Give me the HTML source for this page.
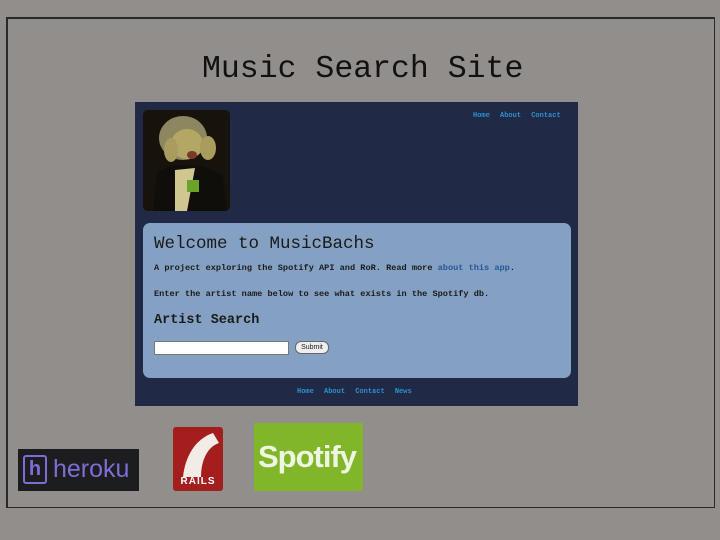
<!DOCTYPE html>
<html><head><style>
body{margin:0;width:720px;height:540px;background:#928e8c;position:relative;overflow:hidden;font-family:"Liberation Mono",monospace}
.frame{position:absolute;left:6px;top:17px;width:706px;height:488px;border:1px solid #2a2a2a;border-top-width:2px;border-left-width:2px}
.title{position:absolute;left:202px;top:52px;font-size:31.5px;color:#111;white-space:nowrap}
.panel{position:absolute;left:135px;top:102px;width:443px;height:304px;background:#202945}
.nav{position:absolute;font-size:7px;font-weight:bold;color:#2f8fd0;white-space:nowrap}
.nav span{margin-right:6px}
.img{position:absolute;left:8px;top:8px;width:87px;height:101px;border-radius:5px;overflow:hidden;background:#14110b}
.box{position:absolute;left:8px;top:121px;width:428px;height:155px;background:#84a0c2;border-radius:7px;color:#1a1a1a}
.h1{position:absolute;left:11px;top:11px;font-size:17.5px;white-space:nowrap}
.p{position:absolute;left:11px;font-size:8.6px;font-weight:bold;white-space:nowrap}
.h2{position:absolute;left:11px;top:90px;font-size:13.5px;font-weight:bold;white-space:nowrap}
input{position:absolute;left:11px;top:118px;width:133px;height:12px;border:1px solid #777;background:#fff;padding:0;margin:0}
.btn{position:absolute;left:152px;top:118px;width:32px;height:11px;border:1px solid #666;border-radius:6px;background:#eee;font:7px "Liberation Sans",sans-serif;text-align:center;line-height:11px}
</style></head><body>
<div class="frame"></div>
<div class="title">Music Search Site</div>
<div class="panel">
  <div class="img">
    <svg width="87" height="101" viewBox="0 0 87 101">
      <rect width="87" height="101" fill="#17130c"/>
      <ellipse cx="40" cy="28" rx="24" ry="22" fill="#8c8760"/>
      <ellipse cx="44" cy="34" rx="16" ry="15" fill="#b4a766"/>
      <ellipse cx="28" cy="40" rx="7" ry="12" fill="#a99c5d"/>
      <ellipse cx="65" cy="38" rx="8" ry="12" fill="#a99c5d"/>
      <ellipse cx="49" cy="45" rx="5" ry="4" fill="#7a3a2a"/>
      <path d="M10 101 L14 62 L30 55 L60 56 L80 66 L84 101Z" fill="#0f0e0a"/>
      <path d="M32 60 L52 58 L44 101 L32 101Z" fill="#cfc690"/>
      <rect x="44" y="70" width="12" height="12" fill="#6aa22a"/>
    </svg>
  </div>
  <div class="nav" style="left:338px;top:10px"><span>Home</span> <span>About</span> <span style="margin:0">Contact</span></div>
  <div class="box">
    <div class="h1">Welcome to MusicBachs</div>
    <div class="p" style="top:40px">A project exploring the Spotify API and RoR. Read more <span style="color:#24589a">about this app</span>.</div>
    <div class="p" style="top:66px">Enter the artist name below to see what exists in the Spotify db.</div>
    <div class="h2">Artist Search</div>
    <input type="text">
    <div class="btn">Submit</div>
  </div>
  <div class="nav" style="left:162px;top:286px"><span>Home</span> <span>About</span> <span>Contact</span> <span style="margin:0">News</span></div>
</div>
<div style="position:absolute;left:18px;top:449px;width:121px;height:42px;background:#1d1c1f">
  <div style="position:absolute;left:5px;top:6px;width:24px;height:29px;border:2px solid #7b6fd6;border-radius:3px;box-sizing:border-box;color:#7b6fd6;font:bold 20px 'Liberation Sans',sans-serif;text-align:center;line-height:25px">h</div>
  <div style="position:absolute;left:35px;top:6px;color:#7b6fd6;font:25px 'Liberation Sans',sans-serif">heroku</div>
</div>
<div style="position:absolute;left:173px;top:427px;width:50px;height:64px;background:#a41e1e;border-radius:3px">
  <svg width="50" height="50" style="position:absolute;left:0;top:0"><path d="M10 50 C12 30 22 12 40 6 L46 16 C34 20 28 34 28 50Z" fill="#f2ece6"/></svg>
  <div style="position:absolute;left:0;width:50px;top:49px;text-align:center;color:#fff;font:bold 10px 'Liberation Sans',sans-serif;letter-spacing:1px">RAILS</div>
</div>
<div style="position:absolute;left:254px;top:423px;width:109px;height:68px;background:#82b62a">
  <div style="position:absolute;left:4px;top:16px;color:#eef5e0;font:bold 31px 'Liberation Sans',sans-serif;letter-spacing:-1px">Spotify</div>
</div>
</body></html>
